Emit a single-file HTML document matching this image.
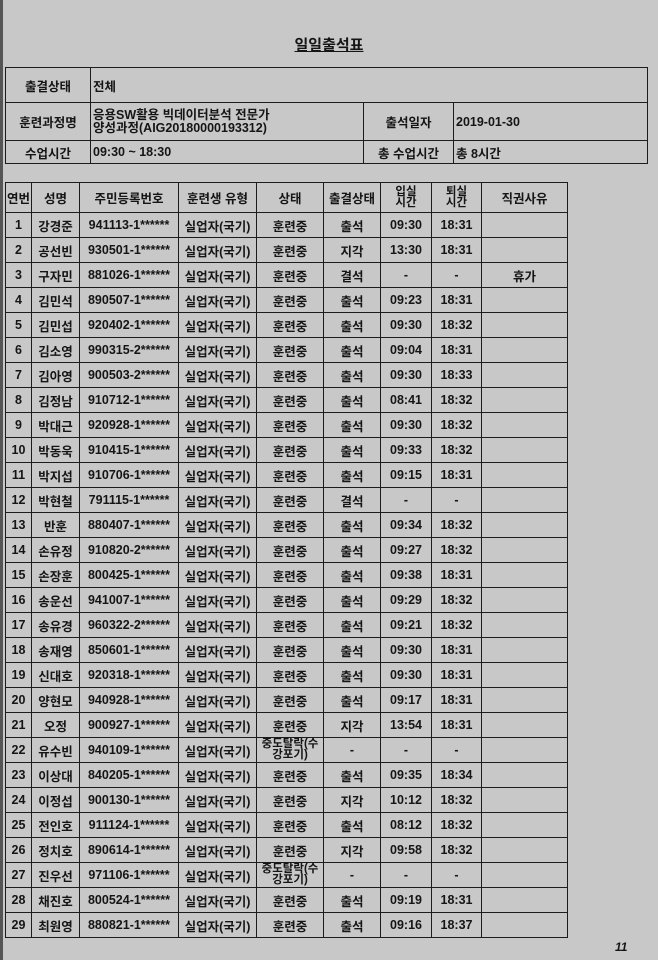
<!DOCTYPE html>
<html><head><meta charset="utf-8"><style>
html,body{margin:0;padding:0}
body{width:658px;height:960px;background:#c8c8c8;position:relative;overflow:hidden;font-family:"Liberation Sans","Noto Sans CJK KR",sans-serif;color:#151515;font-weight:bold}
.edge{position:absolute;left:0;top:0;width:3px;height:960px;background:#555}
.title{position:absolute;left:0;width:658px;top:34px;text-align:center;font-size:15px;text-decoration:underline}
table{position:absolute;border-collapse:collapse;table-layout:fixed}
td{border:1.5px solid #1c1c1c;padding:0;font-size:12.5px;text-align:center;white-space:nowrap;overflow:hidden}
#info{left:5px;top:67px;width:642px}
#info td.l{text-align:left;padding-left:2px}
#info td.n{text-align:left;padding-left:2px;font-size:12.5px;line-height:13px}
#main{left:5px;top:182px;width:562px}
#main td{height:24px;font-weight:bold}
#main tr.h td{height:29px}
#main td.s{font-size:11.5px;line-height:11px}
.pg{position:absolute;left:615px;top:940px;font-size:12px;font-style:italic}
</style></head><body>
<div class="edge"></div>
<div class="title">일일출석표</div>
<table id="info">
<colgroup><col style="width:85px"><col style="width:273px"><col style="width:90px"><col style="width:194px"></colgroup>
<tr style="height:35px"><td>출결상태</td><td class="l" colspan="3">전체</td></tr>
<tr style="height:38px"><td>훈련과정명</td><td class="n">응용SW활용 빅데이터분석 전문가<br>양성과정(AIG20180000193312)</td><td>출석일자</td><td class="l">2019-01-30</td></tr>
<tr style="height:23px"><td>수업시간</td><td class="l">09:30 ~ 18:30</td><td>총 수업시간</td><td class="l">총 8시간</td></tr>
</table>
<table id="main">
<colgroup><col style="width:26px"><col style="width:48px"><col style="width:99px"><col style="width:78px"><col style="width:67px"><col style="width:57px"><col style="width:51px"><col style="width:50px"><col style="width:86px"></colgroup>
<tr class="h"><td>연번</td><td>성명</td><td>주민등록번호</td><td>훈련생 유형</td><td>상태</td><td>출결상태</td><td class="s">입실<br>시간</td><td class="s">퇴실<br>시간</td><td>직권사유</td></tr>
<tr><td>1</td><td>강경준</td><td>941113-1******</td><td>실업자(국기)</td><td>훈련중</td><td>출석</td><td>09:30</td><td>18:31</td><td></td></tr>
<tr><td>2</td><td>공선빈</td><td>930501-1******</td><td>실업자(국기)</td><td>훈련중</td><td>지각</td><td>13:30</td><td>18:31</td><td></td></tr>
<tr><td>3</td><td>구자민</td><td>881026-1******</td><td>실업자(국기)</td><td>훈련중</td><td>결석</td><td>-</td><td>-</td><td>휴가</td></tr>
<tr><td>4</td><td>김민석</td><td>890507-1******</td><td>실업자(국기)</td><td>훈련중</td><td>출석</td><td>09:23</td><td>18:31</td><td></td></tr>
<tr><td>5</td><td>김민섭</td><td>920402-1******</td><td>실업자(국기)</td><td>훈련중</td><td>출석</td><td>09:30</td><td>18:32</td><td></td></tr>
<tr><td>6</td><td>김소영</td><td>990315-2******</td><td>실업자(국기)</td><td>훈련중</td><td>출석</td><td>09:04</td><td>18:31</td><td></td></tr>
<tr><td>7</td><td>김아영</td><td>900503-2******</td><td>실업자(국기)</td><td>훈련중</td><td>출석</td><td>09:30</td><td>18:33</td><td></td></tr>
<tr><td>8</td><td>김정남</td><td>910712-1******</td><td>실업자(국기)</td><td>훈련중</td><td>출석</td><td>08:41</td><td>18:32</td><td></td></tr>
<tr><td>9</td><td>박대근</td><td>920928-1******</td><td>실업자(국기)</td><td>훈련중</td><td>출석</td><td>09:30</td><td>18:32</td><td></td></tr>
<tr><td>10</td><td>박동욱</td><td>910415-1******</td><td>실업자(국기)</td><td>훈련중</td><td>출석</td><td>09:33</td><td>18:32</td><td></td></tr>
<tr><td>11</td><td>박지섭</td><td>910706-1******</td><td>실업자(국기)</td><td>훈련중</td><td>출석</td><td>09:15</td><td>18:31</td><td></td></tr>
<tr><td>12</td><td>박현철</td><td>791115-1******</td><td>실업자(국기)</td><td>훈련중</td><td>결석</td><td>-</td><td>-</td><td></td></tr>
<tr><td>13</td><td>반훈</td><td>880407-1******</td><td>실업자(국기)</td><td>훈련중</td><td>출석</td><td>09:34</td><td>18:32</td><td></td></tr>
<tr><td>14</td><td>손유정</td><td>910820-2******</td><td>실업자(국기)</td><td>훈련중</td><td>출석</td><td>09:27</td><td>18:32</td><td></td></tr>
<tr><td>15</td><td>손장훈</td><td>800425-1******</td><td>실업자(국기)</td><td>훈련중</td><td>출석</td><td>09:38</td><td>18:31</td><td></td></tr>
<tr><td>16</td><td>송운선</td><td>941007-1******</td><td>실업자(국기)</td><td>훈련중</td><td>출석</td><td>09:29</td><td>18:32</td><td></td></tr>
<tr><td>17</td><td>송유경</td><td>960322-2******</td><td>실업자(국기)</td><td>훈련중</td><td>출석</td><td>09:21</td><td>18:32</td><td></td></tr>
<tr><td>18</td><td>송재영</td><td>850601-1******</td><td>실업자(국기)</td><td>훈련중</td><td>출석</td><td>09:30</td><td>18:31</td><td></td></tr>
<tr><td>19</td><td>신대호</td><td>920318-1******</td><td>실업자(국기)</td><td>훈련중</td><td>출석</td><td>09:30</td><td>18:31</td><td></td></tr>
<tr><td>20</td><td>양현모</td><td>940928-1******</td><td>실업자(국기)</td><td>훈련중</td><td>출석</td><td>09:17</td><td>18:31</td><td></td></tr>
<tr><td>21</td><td>오정</td><td>900927-1******</td><td>실업자(국기)</td><td>훈련중</td><td>지각</td><td>13:54</td><td>18:31</td><td></td></tr>
<tr><td>22</td><td>유수빈</td><td>940109-1******</td><td>실업자(국기)</td><td class="s">중도탈락(수<br>강포기)</td><td>-</td><td>-</td><td>-</td><td></td></tr>
<tr><td>23</td><td>이상대</td><td>840205-1******</td><td>실업자(국기)</td><td>훈련중</td><td>출석</td><td>09:35</td><td>18:34</td><td></td></tr>
<tr><td>24</td><td>이정섭</td><td>900130-1******</td><td>실업자(국기)</td><td>훈련중</td><td>지각</td><td>10:12</td><td>18:32</td><td></td></tr>
<tr><td>25</td><td>전인호</td><td>911124-1******</td><td>실업자(국기)</td><td>훈련중</td><td>출석</td><td>08:12</td><td>18:32</td><td></td></tr>
<tr><td>26</td><td>정치호</td><td>890614-1******</td><td>실업자(국기)</td><td>훈련중</td><td>지각</td><td>09:58</td><td>18:32</td><td></td></tr>
<tr><td>27</td><td>진우선</td><td>971106-1******</td><td>실업자(국기)</td><td class="s">중도탈락(수<br>강포기)</td><td>-</td><td>-</td><td>-</td><td></td></tr>
<tr><td>28</td><td>채진호</td><td>800524-1******</td><td>실업자(국기)</td><td>훈련중</td><td>출석</td><td>09:19</td><td>18:31</td><td></td></tr>
<tr><td>29</td><td>최원영</td><td>880821-1******</td><td>실업자(국기)</td><td>훈련중</td><td>출석</td><td>09:16</td><td>18:37</td><td></td></tr>
</table>
<div class="pg">11</div>
</body></html>
